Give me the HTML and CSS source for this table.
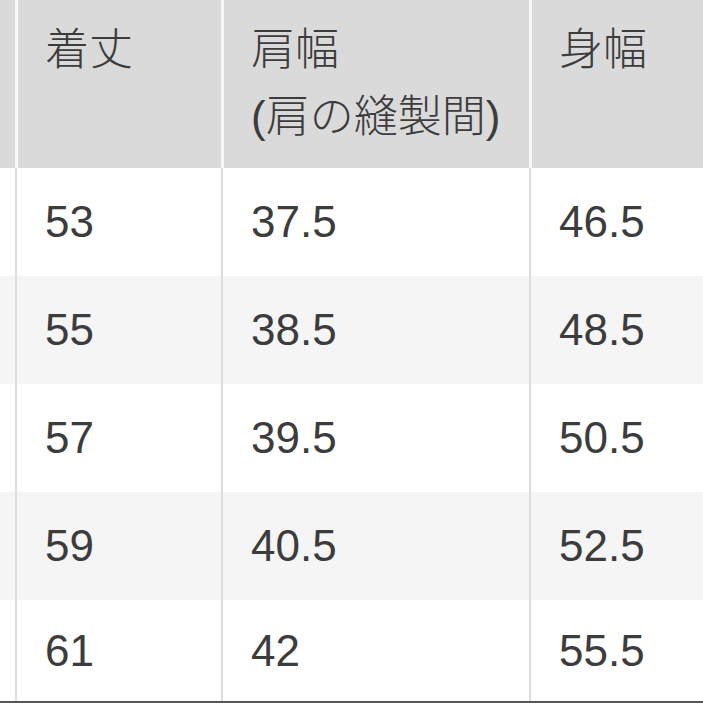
FILE: index.html
```html
<!DOCTYPE html>
<html lang="ja">
<head>
<meta charset="utf-8">
<title>サイズ表</title>
<link rel="stylesheet" href="styles.css">
</head>
<body>
<div class="table">
  <div class="row head">
    <div class="cell edge"></div>
    <div class="cell">着丈</div>
    <div class="cell">肩幅<br>(肩の縫製間)</div>
    <div class="cell">身幅</div>
  </div>
  <div class="row">
    <div class="cell edge"></div>
    <div class="cell">53</div>
    <div class="cell">37.5</div>
    <div class="cell">46.5</div>
  </div>
  <div class="row alt">
    <div class="cell edge"></div>
    <div class="cell">55</div>
    <div class="cell">38.5</div>
    <div class="cell">48.5</div>
  </div>
  <div class="row">
    <div class="cell edge"></div>
    <div class="cell">57</div>
    <div class="cell">39.5</div>
    <div class="cell">50.5</div>
  </div>
  <div class="row alt">
    <div class="cell edge"></div>
    <div class="cell">59</div>
    <div class="cell">40.5</div>
    <div class="cell">52.5</div>
  </div>
  <div class="row last">
    <div class="cell edge"></div>
    <div class="cell">61</div>
    <div class="cell">42</div>
    <div class="cell">55.5</div>
  </div>
</div>
</body>
</html>
```

FILE: styles.css
```css
html, body {
  margin: 0;
  padding: 0;
  background: #ffffff;
  overflow: hidden;
}

body {
  width: 703px;
  height: 703px;
  font-family: "Liberation Sans", "Noto Sans CJK JP", sans-serif;
  color: #3c3c3c;
  font-size: 44px;
}

.table {
  display: flex;
  flex-direction: column;
}

.row {
  display: grid;
  grid-template-columns: 15px 206px 308px 1fr;
  height: 108px;
  background: #ffffff;
}

.row.alt {
  background: #f5f5f5;
}

.row.head {
  height: 168px;
  background: #dadada;
}

.row.last {
  height: 101px;
  border-bottom: 2px solid #555555;
}

.cell {
  box-sizing: border-box;
  display: flex;
  align-items: center;
  padding-left: 28px;
  border-left: 2px solid #dddddd;
  line-height: 1;
  white-space: nowrap;
}

.cell.edge {
  border-left: none;
  padding: 0;
}

.head .cell {
  display: block;
  border-left: 3px solid #f7f7f7;
  padding-top: 16px;
  padding-left: 27px;
  line-height: 67px;
  font-weight: 300;
}

.head .cell.edge {
  border-left: none;
  padding: 0;
}
```
